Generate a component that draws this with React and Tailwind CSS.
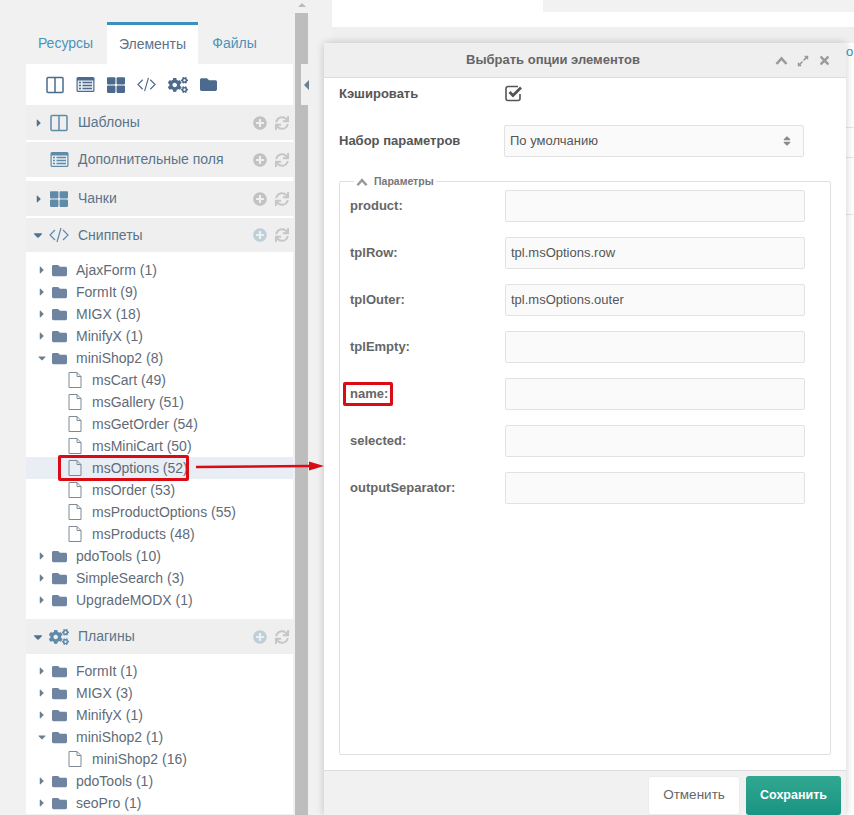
import React from 'react'
import {
  FaCaretDown, FaCaretRight, FaCogs, FaExpandAlt, FaFolder, FaPlusCircle,
  FaSort, FaSync, FaThLarge, FaTimes,
} from 'react-icons/fa'

const ColumnsIcon = ({ size = 18, className = '' }) => (
  <svg width={size} height={size} viewBox="0 0 18 18" className={className} fill="none" stroke="currentColor" strokeWidth="1.5">
    <rect x="1" y="1.5" width="16" height="15" rx="1" />
    <path d="M9 1.5v15" />
  </svg>
)

const CodeIcon = ({ size = 20, className = '' }) => (
  <svg width={size} height={size} viewBox="0 0 20 20" className={className} fill="none" stroke="currentColor" strokeWidth="1.2">
    <path d="M6 5L1 10l5 5M14 5l5 5-5 5M12 3L8 17" />
  </svg>
)

const ListIcon = ({ size = 19, className = '' }) => (
  <svg width={size} height={size} viewBox="0 0 19 19" className={className}>
    <rect x="0.5" y="2" width="18" height="15" rx="1.5" fill="currentColor" />
    <rect x="1.7" y="5.5" width="15.6" height="10.3" fill="#e9eef2" />
    <path d="M3 7.5h2M3 10.5h2M3 13.5h2M6.5 7.5H16M6.5 10.5H16M6.5 13.5H16" stroke="currentColor" strokeWidth="1.3" />
  </svg>
)

const FileIcon = () => (
  <svg width="14" height="16" viewBox="0 0 14 16" fill="none" stroke="#7d8a96" strokeWidth="1">
    <path d="M1 .5h8l4 4v11H1zM9 .5v4h4" />
  </svg>
)

const ChevronIcon = ({ size = 13, className = '' }) => (
  <svg width={size} height={size} viewBox="0 0 13 13" className={className} fill="none" stroke="currentColor" strokeWidth="2.6">
    <path d="M1.5 10L6.5 4.5 11.5 10" />
  </svg>
)

const CheckIcon = () => (
  <svg width="18" height="17" viewBox="0 0 18 17" fill="none" stroke="#555">
    <path d="M15 9v4.5a2 2 0 0 1-2 2H3a2 2 0 0 1-2-2v-10a2 2 0 0 1 2-2h10" strokeWidth="1.6" />
    <path d="M4.5 7L8 10.5 16 2.5" strokeWidth="2.8" />
  </svg>
)

const Folder = ({ open, name }) => (
  <div className="flex items-center h-[22px] pl-[8px]">
    <span className="w-[16px] flex justify-center text-[#6b7f92]">
      {open ? <FaCaretDown size={12} /> : <FaCaretRight size={12} />}
    </span>
    <FaFolder size={15} className="ml-[2px] text-[#6e84a0]" />
    <span className="ml-[9px] text-[14px] text-[#5f6b78]">{name}</span>
  </div>
)

const Snippet = ({ name, active }) => (
  <div className={`flex items-center h-[22px] pl-[42px] ${active ? 'bg-[#e8eef4]' : ''}`}>
    <FileIcon />
    <span className="ml-[10px] text-[14px] text-[#5f6b78]">{name}</span>
  </div>
)

const Section = ({ icon, name, arrow, light, mt = 'mt-0', h = 'h-[35px]' }) => (
  <div className={`flex items-center ${h} ${mt} w-[269px] bg-[#efefef]`}>
    <span className="w-[23px] flex justify-end pr-[4px] text-[#4f7390]">
      {arrow === 'right' && <FaCaretRight size={12} />}
      {arrow === 'down' && <FaCaretDown size={14} />}
    </span>
    <span className="w-[20px] flex justify-center text-[#5f8aa8]">{icon}</span>
    <span className="ml-[9px] text-[14px] text-[#5b7489]">{name}</span>
    <span className={`ml-auto mr-[6px] flex items-center gap-[8px] ${light ? 'text-[#bfcfda]' : 'text-[#c2c2c2]'}`}>
      <FaPlusCircle size={14} />
      <FaSync size={14} className="text-[#c6c6c6]" />
    </span>
  </div>
)

const Field = ({ label, value }) => (
  <div className="flex items-center h-[32px] mb-[15px]">
    <div className="w-[165px] pl-[10px] text-[13px] font-bold text-[#666]">{label}</div>
    <div className="w-[300px] h-[32px] flex items-center px-[5px] bg-[#fafafa] border border-[#e2e2e2] rounded-[2px] text-[13px] text-[#555]">
      {value}
    </div>
  </div>
)

const snippets = ['msCart (49)', 'msGallery (51)', 'msGetOrder (54)', 'msMiniCart (50)', 'msOptions (52)', 'msOrder (53)', 'msProductOptions (55)', 'msProducts (48)']

const App = () => {
  return (
    <div className="relative flex h-[815px] w-[854px] overflow-hidden bg-[#f1f1f1] font-['Liberation_Sans',Arial,sans-serif]">
      {/* left tree */}
      <div className="w-[295px] shrink-0 pl-[26px] pt-[22px]">
        <div className="flex h-[42px] text-[14px]">
          <div className="w-[81px] flex items-center justify-center pr-[2px] text-[#4b93b8]">Ресурсы</div>
          <div className="w-[91px] flex items-center justify-center bg-white border-t-[3px] border-[#3a8fbd] text-[#5b7489]">Элементы</div>
          <div className="w-[73px] flex items-center justify-center text-[#4b93b8]">Файлы</div>
        </div>
        <div className="w-[267px] bg-white">
          <div className="flex items-center h-[41px] pl-[20px] gap-[12px] text-[#4c6a8d]">
            <ColumnsIcon size={18} className="text-[#4a6c8c]" />
            <ListIcon size={19} />
            <FaThLarge size={18} />
            <CodeIcon size={19} />
            <FaCogs size={20} />
            <FaFolder size={17} />
          </div>
          <Section icon={<ColumnsIcon size={18} />} name="Шаблоны" arrow="right" />
          <Section icon={<ListIcon size={19} />} name="Дополнительные поля" mt="mt-[2px]" />
          <Section icon={<FaThLarge size={18} />} name="Чанки" mt="mt-[4px]" arrow="right" />
          <Section icon={<CodeIcon size={20} />} name="Сниппеты" arrow="down" light mt="mt-[2px]" h="h-[34px]" />
          <div className="pt-[7px] pb-[8px]">
            <Folder name="AjaxForm (1)" />
            <Folder name="FormIt (9)" />
            <Folder name="MIGX (18)" />
            <Folder name="MinifyX (1)" />
            <Folder open name="miniShop2 (8)" />
            {snippets.map(s => <Snippet key={s} name={s} active={s.startsWith('msOptions')} />)}
            <Folder name="pdoTools (10)" />
            <Folder name="SimpleSearch (3)" />
            <Folder name="UpgradeMODX (1)" />
          </div>
          <Section icon={<FaCogs size={20} />} name="Плагины" arrow="down" light />
          <div className="pt-[6px]">
            <Folder name="FormIt (1)" />
            <Folder name="MIGX (3)" />
            <Folder name="MinifyX (1)" />
            <Folder open name="miniShop2 (1)" />
            <Snippet name="miniShop2 (16)" />
            <Folder name="pdoTools (1)" />
            <Folder name="seoPro (1)" />
          </div>
        </div>
      </div>

      {/* splitter */}
      <div className="w-[13px] shrink-0 pt-[13px]">
        <div className="h-full bg-[#bdbdbd]" />
      </div>

      {/* page behind the window */}
      <div className="ml-[24px] flex-1 flex flex-col">
        <div className="h-[27px] bg-white pl-[211px]">
          <div className="h-[12px] bg-[#f2f2f2]" />
        </div>
        <div className="h-[16px] bg-[#efefef]" />
        <div className="flex-1 bg-white pl-[514px]">
          <div className="h-[24px] text-[13px] leading-[18px] text-[#3a8fbd]">o</div>
          <div className="mt-[60px] h-[31px] border-t border-b border-[#e6e6e6]" />
          <div className="mt-[56px] border-t border-[#e6e6e6]" />
        </div>
      </div>

      {/* up arrow of the scrollbar */}
      <div className="absolute left-[298px] top-[3px] w-0 h-0 border-x-[4px] border-b-[4px] border-x-transparent border-b-[#bbb]" />
      {/* collapse handle */}
      <div className="absolute left-[301px] top-[64px] w-[11px] h-[41px] flex items-center justify-center bg-[#f0f0f0]">
        <div className="w-0 h-0 border-y-[5px] border-r-[5px] border-y-transparent border-r-[#6b7f92]" />
      </div>

      {/* window */}
      <div className="absolute left-[324px] top-[43px] w-[522px] h-[772px] flex flex-col bg-white shadow-[0_0_8px_rgba(0,0,0,0.2)]">
        <div className="relative h-[35px] shrink-0 flex items-center justify-center pr-[64px] bg-[#efefef] border-b border-[#dcdcdc] text-[13px] font-bold text-[#666]">
          Выбрать опции элементов
          <div className="absolute right-[15px] top-[11px] flex items-center gap-[9px] text-[#9a9a9a]">
            <ChevronIcon size={13} />
            <FaExpandAlt size={12} />
            <FaTimes size={13} />
          </div>
        </div>
        <div className="flex-1 px-[15px]">
          <div className="flex items-center h-[17px] mt-[7px]">
            <div className="w-[166px] text-[13px] font-bold text-[#555]">Кэшировать</div>
            <CheckIcon />
          </div>
          <div className="flex items-center h-[32px] mt-[23px]">
            <div className="w-[165px] text-[13px] font-bold text-[#555]">Набор параметров</div>
            <div className="w-[300px] h-[32px] flex items-center justify-between pl-[5px] pr-[10px] bg-[#fafafa] border border-[#e2e2e2] rounded-[2px] text-[13px] text-[#555]">
              По умолчанию
              <FaSort size={12} className="text-[#8a8a8a]" />
            </div>
          </div>
          <fieldset className="mt-[17px] h-[581px] w-[492px] border border-[#dfdfdf] rounded-[2px]">
            <legend className="ml-[14px] flex items-center gap-[6px] px-[2px] h-[14px] translate-y-[1px] text-[10.5px] font-bold text-[#777]">
              <ChevronIcon size={12} className="text-[#999]" />
              Параметры
            </legend>
            <div className="pt-[2px]">
              <Field label="product:" />
              <Field label="tplRow:" value="tpl.msOptions.row" />
              <Field label="tplOuter:" value="tpl.msOptions.outer" />
              <Field label="tplEmpty:" />
              <Field label="name:" />
              <Field label="selected:" />
              <Field label="outputSeparator:" />
            </div>
          </fieldset>
        </div>
        <div className="h-[45px] shrink-0 flex justify-end items-end gap-[6px] pr-[5px] bg-[#f1f1f1] border-t border-[#dcdcdc]">
          <button className="w-[92px] h-[39px] bg-white border border-[#ececec] rounded-[3px] text-[13.5px] text-[#666]">Отменить</button>
          <button className="w-[95px] h-[39px] rounded-[3px] bg-gradient-to-b from-[#30a890] to-[#189483] text-[12.5px] font-bold text-white">Сохранить</button>
        </div>
      </div>

      {/* red annotations */}
      <div className="absolute left-[58px] top-[455px] w-[131px] h-[26px] border-[3px] border-[#dc0a14] rounded-[2px]" />
      <div className="absolute left-[343px] top-[382px] w-[50px] h-[24px] border-[3px] border-[#dc0a14] rounded-[2px]" />
      <svg className="absolute left-[196px] top-[459px]" width="129" height="14" viewBox="0 0 129 14">
        <path d="M0 8L114 7" stroke="#dc0a14" strokeWidth="2.5" />
        <path d="M113 2.5L128 7L113 11.5z" fill="#dc0a14" />
      </svg>
    </div>
  )
}

export default App
